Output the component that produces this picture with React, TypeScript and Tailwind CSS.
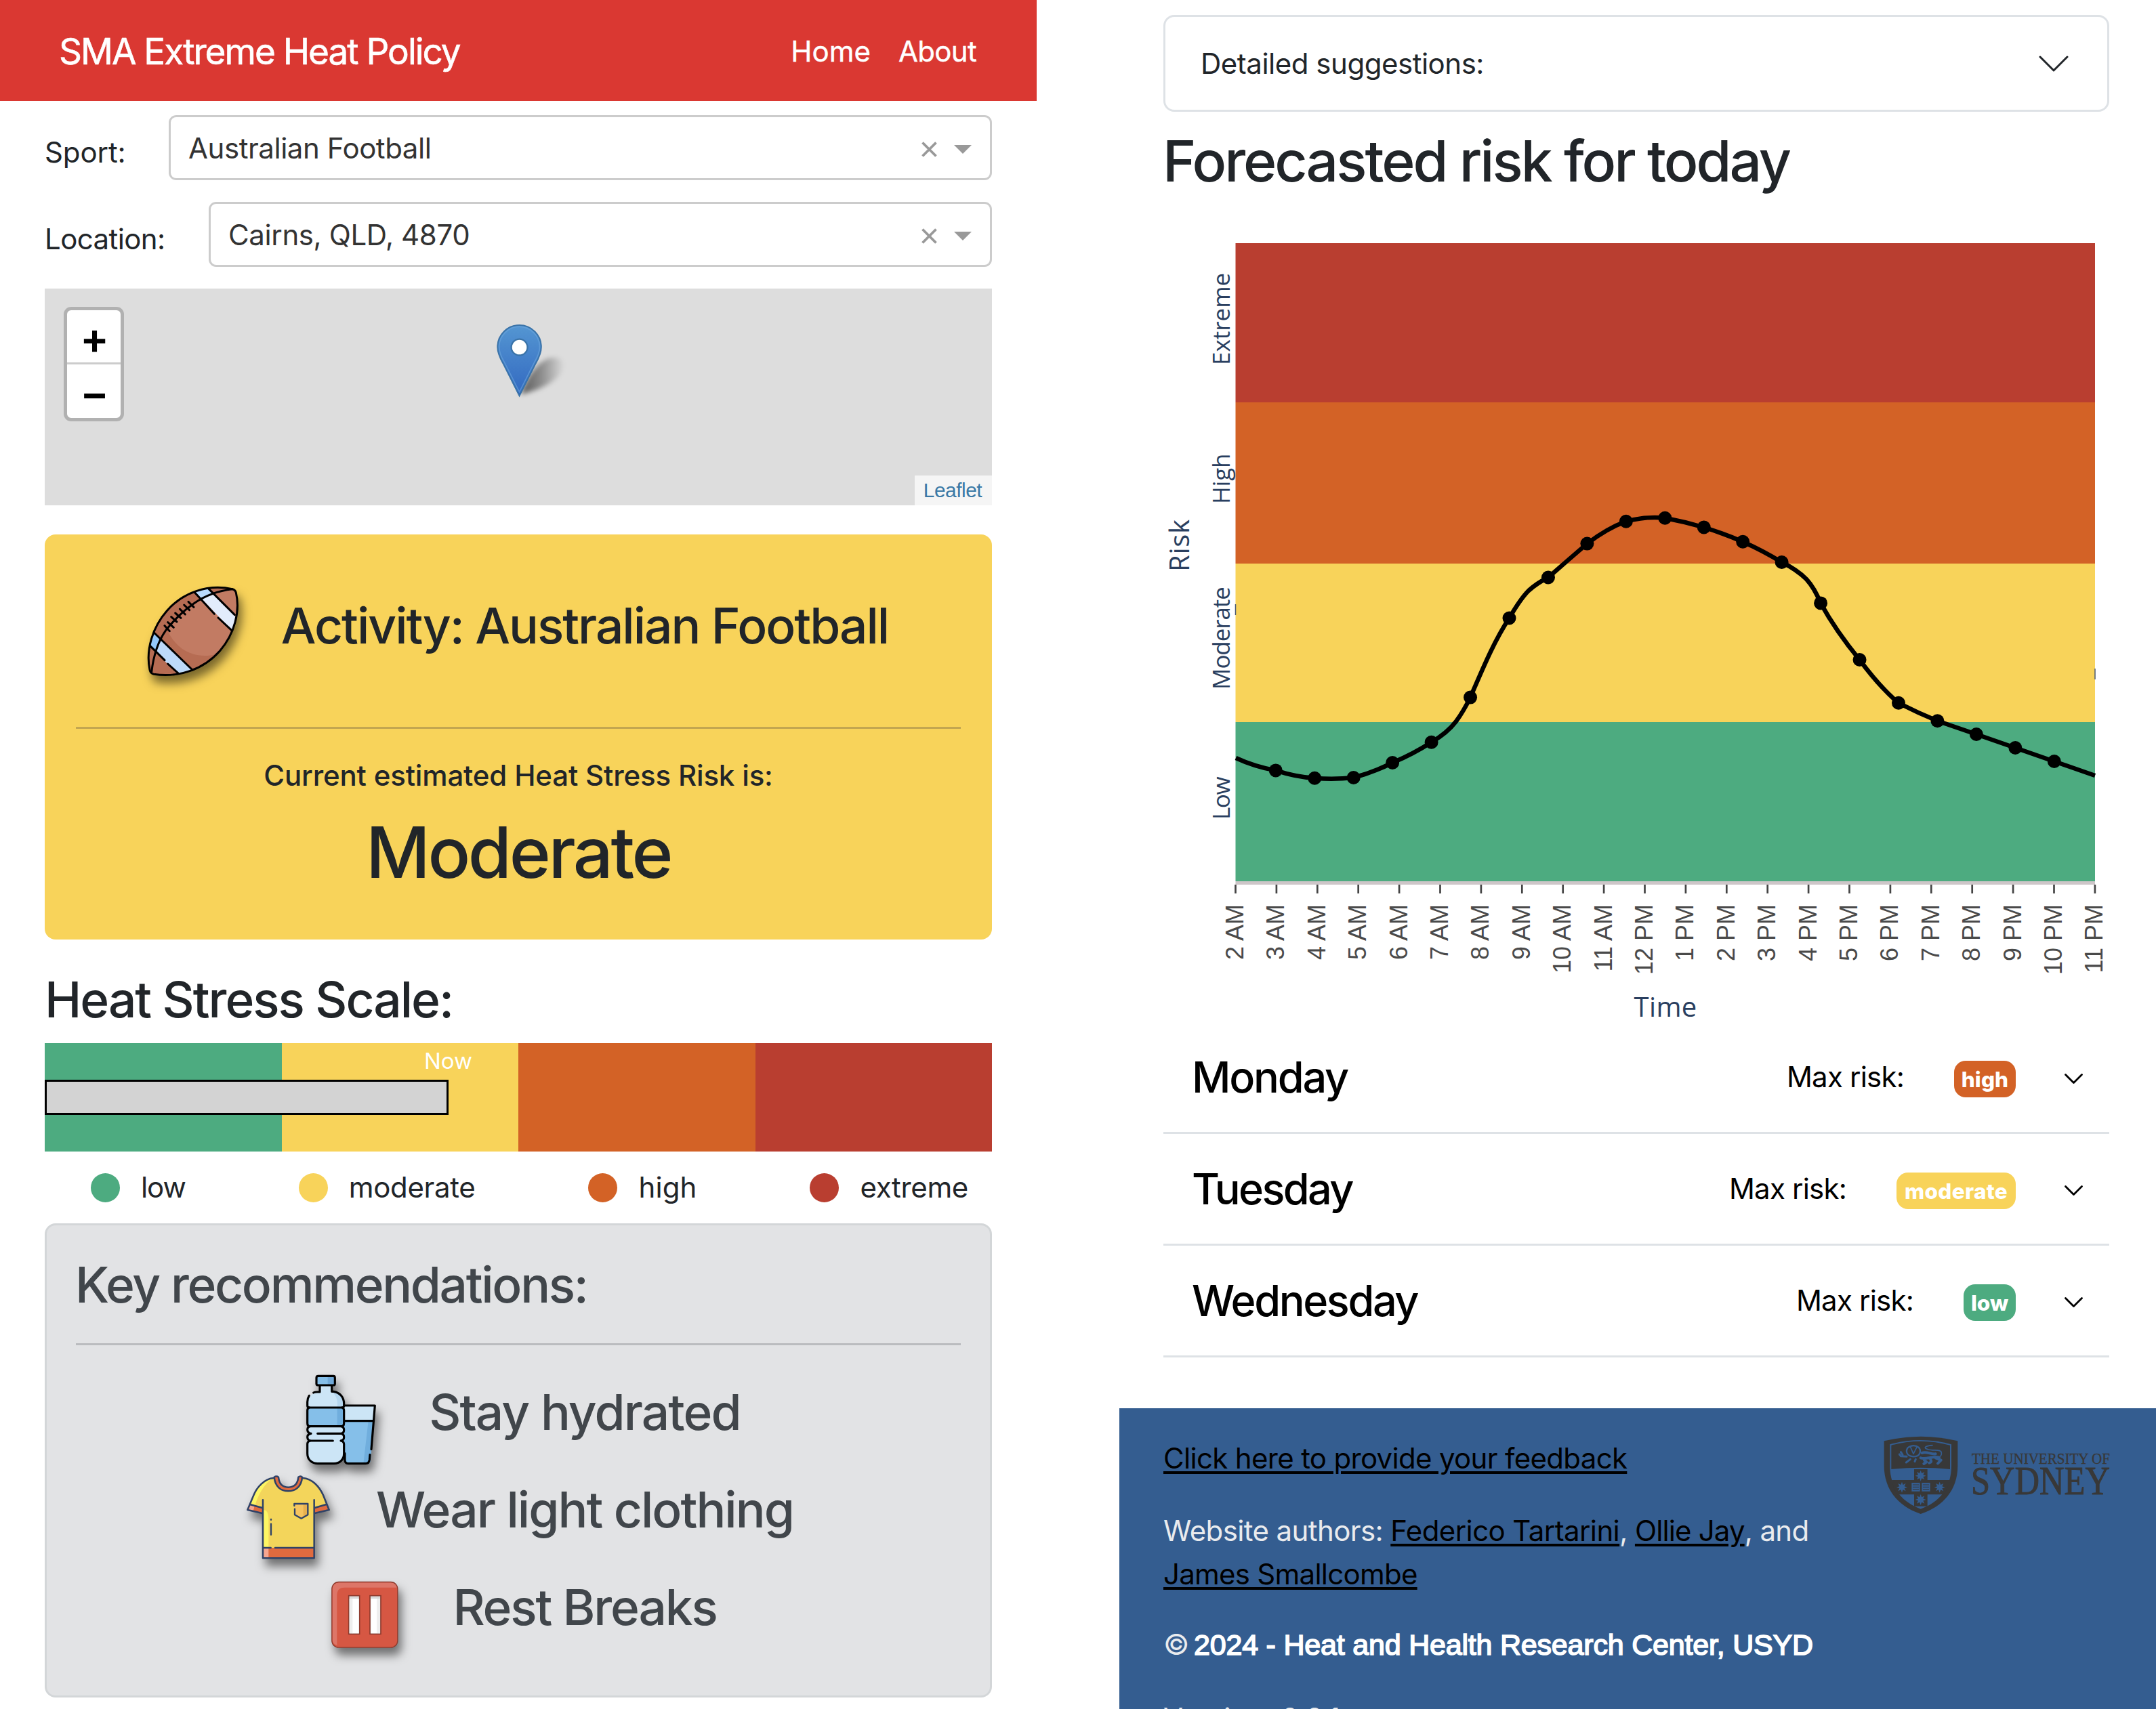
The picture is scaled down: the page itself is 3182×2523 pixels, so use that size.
import React from 'react';

const ICON = 'shrink-0 size-[136px] overflow-visible drop-shadow-[5px_11px_7px_rgba(0,0,0,0.5)]';

function FootballIcon() {
  return (
    <svg viewBox="112 135 408 408" className={ICON} fill="none" strokeLinecap="round" strokeLinejoin="round">
      <defs>
        <clipPath id="ball">
          <path d="M490 152C380 128 270 168 200 248C138 318 105 420 124 510Q127 526 142 529C250 545 360 510 435 425C500 350 525 250 506 168Q503 155 490 152Z" />
        </clipPath>
      </defs>
      <g clipPath="url(#ball)">
        <rect x="100" y="120" width="440" height="440" fill="#c27b63" />
        <path d="M200 330C240 420 320 465 420 440L330 550H100V430Z" fill="#b66c53" />
        <path d="M492 152C420 160 370 180 320 215C270 250 230 290 195 335C160 385 140 450 132 520L90 520V120H492Z" fill="#b66c53" />
        <path d="M325 165L488 335L530 300L385 150Z" fill="#e2ecfb" />
        <path d="M325 165L350 196L402 170L380 140Z" fill="#b9dafc" />
        <path d="M140 343L315 512L250 530L120 400Z" fill="#bddafa" />
        <path d="M140 343L175 372L152 428L118 400Z" fill="#94c8fa" />
      </g>
      <g stroke="#000" strokeWidth="9">
        <path d="M490 152C420 160 370 180 320 215C270 250 230 290 195 335C160 385 140 450 132 520" />
        <path d="M322 166L410 262M427 279L486 334M386 152L500 266M143 345L313 510M126 404L190 467M204 483L249 524" />
        <path d="M190 314L212 338M204 299L230 322M219 275L244 297M237 258L262 280M257 240L281 264M276 222L300 245M295 208L319 232" />
        <path d="M490 152C380 128 270 168 200 248C138 318 105 420 124 510Q127 526 142 529C250 545 360 510 435 425C500 350 525 250 506 168Q503 155 490 152Z" />
      </g>
    </svg>
  );
}

function BottleIcon() {
  return (
    <svg viewBox="286 87 408 408" className={ICON} fill="none" strokeLinecap="round" strokeLinejoin="round">
      <path d="M505 228H641L622 470Q620 485 606 485H520Q508 485 505 470Z" fill="#85bfe9" />
      <path d="M505 228H641L636 296H505Z" fill="#cce5f6" />
      <path d="M612 296H636L622 470Q620 485 600 485H590Z" fill="#70aedd" />
      <path d="M390 97H458Q464 97 464 105V138H382V105Q382 97 390 97Z" fill="#85bfe9" />
      <path d="M432 97H464V138H432Z" fill="#70a9d8" />
      <path d="M397 140H450V165C490 170 504 195 504 225V440C504 470 485 485 460 485H388C360 485 342 465 342 440V225C342 190 360 170 397 168Z" fill="#cce5f6" />
      <path d="M342 237H504V320H342Z" fill="#85bfe9" />
      <path d="M474 237H504V320H474Z" fill="#70aedd" />
      <path d="M450 165C490 170 504 195 504 237H474C478 205 470 185 450 165Z" fill="#b5d6ee" />
      <g stroke="#000" strokeWidth="9.5">
        <path d="M390 97H457Q464 97 464 105V131Q464 138 457 138H390Q382 138 382 131V105Q382 97 390 97ZM397 140V168H385Q374 168 369 171M450 140V166H458C486 170 504 192 504 220V228Q504 237 496 237H350Q342 237 342 228V212Q342 196 350 184" />
        <path d="M350 237Q342 240 342 250V306Q342 320 354 320H492Q504 320 504 306V250Q504 240 496 237" />
        <path d="M354 320Q342 322 342 336Q344 351 358 352M492 320Q504 323 504 336Q504 350 492 352H387M358 352Q342 354 342 368Q343 382 354 384H455M492 352Q504 354 504 368Q504 382 490 384" />
        <path d="M354 384Q342 386 342 400V440C342 468 362 485 388 485H460C486 485 504 466 504 440V400Q504 388 492 384" />
        <path d="M508 228H641L625 422M508 296H636M619 446L617 468Q615 485 600 485H522Q508 485 508 468V440" />
      </g>
    </svg>
  );
}

function ShirtIcon() {
  return (
    <svg viewBox="50 519 408 408" className={ICON} fill="none" strokeLinecap="round" strokeLinejoin="round">
      <path d="M193 546C150 550 115 590 100 630L74 690L143 705V904H370V705L436 690L410 625C392 585 360 550 317 546C310 590 285 605 255 605C225 605 198 590 193 546Z" fill="#f3d55b" />
      <path d="M186 549C150 552 115 590 100 630L86 665L108 671C122 625 145 580 186 549ZM143 690Q168 690 168 730V858H143Z" fill="#fdf664" />
      <path d="M83 667L143 683V706L74 690ZM427 667L370 683V706L436 690ZM143 858H370V904H143Z" fill="#e06a3f" />
      <path d="M83 667L106 673L100 696L74 690ZM143 858H168V904H143Z" fill="#f6a690" />
      <path d="M193 545Q203 536 212 545C215 575 230 590 255 590C280 590 297 575 300 545Q308 536 317 545C314 590 285 607 255 607C225 607 197 590 193 545Z" fill="#e06a3f" />
      <path d="M284 663H342V712L313 727L284 712Z" fill="#f6c45f" />
      <path d="M322 663H342V712L322 722Z" fill="#e7b04f" />
      <g stroke="#2f4267" strokeWidth="7.5">
        <path d="M193 545Q203 538 212 545C215 575 230 590 255 590C280 590 297 575 300 545Q308 538 317 545C314 590 285 607 255 607C225 607 197 590 193 545Z" />
        <path d="M190 549C150 552 115 590 100 630L75 690L140 705M320 549C360 552 392 585 410 625L436 690L372 705M86 666L140 681M424 666L372 681" />
        <path d="M143 646V904H370V646M143 858H178M197 858H370" />
        <path d="M282 672V663H342V712L313 728L284 712V686M179 732V734M179 752V800" strokeWidth="7" />
      </g>
    </svg>
  );
}

function PauseIcon() {
  return (
    <svg viewBox="390 951 408 408" className={ICON} fill="none">
      <rect x="449" y="1009" width="292" height="291" rx="30" fill="#d65743" />
      <path d="M452 1270V1042Q452 1012 482 1012H708Q736 1012 738 1034H505Q472 1034 472 1068V1290Q454 1284 452 1270Z" fill="#dd7668" />
      <rect x="449.500" y="1009.500" width="291" height="290" rx="30" stroke="#8d3b2e" strokeWidth="4" />
      <g stroke="#8d3b2e" strokeWidth="5">
        <rect x="524" y="1070" width="48" height="170" fill="#d9d9d9" />
        <rect x="618" y="1070" width="48" height="170" fill="#d9d9d9" />
      </g>
      <path d="M539 1084H569V1237H539ZM622 1084H650V1237H622Z" fill="#fff" />
      <path d="M527 1084H541V1237H527ZM650 1084H663V1237H650Z" fill="#eee" />
    </svg>
  );
}

function MarkerIcon() {
  return (
    <svg viewBox="90 80 350 340" className="absolute left-[664px] top-[51px] h-[113px] w-[117px] overflow-visible" fill="none">
      <defs>
        <linearGradient id="pin" x1="0" y1="0" x2="0" y2="1">
          <stop offset="0" stopColor="#5496d2" />
          <stop offset="1" stopColor="#3268c0" />
        </linearGradient>
        <linearGradient id="shade" x1="0" y1="0" x2="1" y2="0">
          <stop offset="0" stopColor="#000" stopOpacity="0.6" />
          <stop offset="0.500" stopColor="#000" stopOpacity="0.35" />
          <stop offset="1" stopColor="#000" stopOpacity="0.020" />
        </linearGradient>
        <filter id="soft" x="-30%" y="-30%" width="160%" height="160%">
          <feGaussianBlur stdDeviation="12" />
        </filter>
      </defs>
      <path d="M205 396C225 340 262 262 330 236C400 222 412 270 372 316C330 360 260 384 205 396Z" fill="url(#shade)" filter="url(#soft)" />
      <path d="M199 403L126 258C110 230 102 210 102 186A97 97 0 0 1 296 186C296 210 288 230 272 258Z" fill="url(#pin)" stroke="#3a73a8" strokeWidth="6" />
      <path d="M199 386L133 255C117 228 109 208 109 186A90 90 0 0 1 289 186C289 208 281 228 265 255Z" stroke="#6aa5dc" strokeWidth="5" opacity="0.600" />
      <circle cx="199" cy="187" r="36" fill="#fff" stroke="#3a73a8" strokeWidth="7" />
    </svg>
  );
}

const STARS: [number, number][] = [[284, 269], [201, 320], [368, 320], [284, 375]];

function starPoints(cx: number, cy: number) {
  return Array.from({ length: 16 }, (_, i) => {
    const r = i % 2 ? 12 : 24;
    const a = (i * Math.PI) / 8;
    return `${(cx + r * Math.sin(a)).toFixed(1)},${(cy - r * Math.cos(a)).toFixed(1)}`;
  }).join(' ');
}

function UniversityLogo() {
  return (
    <svg viewBox="120 93 1002 348" className="mt-[41px] h-[116px] w-[334px] shrink-0 overflow-visible">
      <path d="M122 115Q284 76 448 115V225C448 330 385 405 284 438C185 405 122 330 122 225Z" fill="#383838" />
      <path d="M148 130Q284 92 420 130V225C420 320 370 385 284 416C198 385 148 320 148 225Z" fill="#345d90" />
      <path d="M154 134Q284 98 414 134V240Q284 226 154 240Z" fill="#383838" />
      <path d="M255 240H314V288H412Q406 325 386 352H314V404H255V352H182Q162 325 156 288H255Z" fill="#383838" />
      {STARS.map(([x, y]) => (
        <polygon key={`${x}-${y}`} points={starPoints(x, y)} fill="#345d90" />
      ))}
      <path d="M244 300H281V338H244ZM289 300H326V338H289Z" fill="#345d90" />
      <path d="M249 309H276M249 319H276M249 329H276M294 309H321M294 319H321M294 329H321" stroke="#383838" strokeWidth="3" />
      <g fill="none" stroke="#345d90" strokeLinecap="round" strokeLinejoin="round">
        <path d="M290 168C312 160 330 176 350 172M284 190C310 198 340 180 366 188M350 190L374 200L360 214M300 200L310 208L298 216M326 192C330 204 336 208 322 212" strokeWidth="12" />
        <path d="M376 168C376 150 340 160 316 152C296 146 300 138 336 134M376 168C378 178 370 184 364 188" strokeWidth="5" />
        <path d="M222 184L196 182M196 182L190 174M196 164L204 176M238 196L220 210M262 196L258 206" strokeWidth="9" />
        <path d="M226 146C216 164 224 182 252 184C282 184 288 160 276 144Q252 126 226 146Z" strokeWidth="7" />
        <path d="M238 140L252 172L268 140" strokeWidth="5" />
      </g>
      <g fill="#383838" stroke="#383838" fontFamily="Liberation Serif, serif">
        <text x="510" y="215" fontSize="71" strokeWidth="1" textLength="612" lengthAdjust="spacingAndGlyphs">THE UNIVERSITY OF</text>
        <text x="507" y="352" fontSize="175" strokeWidth="3" textLength="615" lengthAdjust="spacingAndGlyphs">SYDNEY</text>
      </g>
    </svg>
  );
}

function Select({ value, className }: { value: string; className: string }) {
  return (
    <div className="flex h-[96px] flex-1 items-center rounded-[11px] border-[3px] border-[#ccc] pl-[26px] pr-[27px]">
      <span className={`flex-1 pt-px text-[42px] leading-[60px] text-[#333] ${className}`}>{value}</span>
      <svg viewBox="0 0 23 23" className="mt-[5px] size-[23px]" stroke="#999" strokeWidth="3.800">
        <path d="M1.500 1.500L21.500 21.500M21.500 1.500L1.500 21.500" />
      </svg>
      <svg viewBox="0 0 26 13" className="ml-[25px] mt-[5px] h-[13px] w-[26px]" fill="#999">
        <path d="M0 0H26L13 13Z" />
      </svg>
    </div>
  );
}

const LEGEND = [
  { label: 'low', dot: 'bg-[#4dab80]', text: 'tracking-[-1.1px]' },
  { label: 'moderate', dot: 'bg-[#f8d35a]', text: 'tracking-[-0.34px]' },
  { label: 'high', dot: 'bg-[#d36226]', text: 'tracking-[0.08px]' },
  { label: 'extreme', dot: 'bg-[#b93e30]', text: 'tracking-[-0.34px]' },
];

const TIPS = [
  { label: 'Stay hydrated', icon: <BottleIcon />, text: 'tracking-[-1.9px]' },
  { label: 'Wear light clothing', icon: <ShirtIcon />, text: 'tracking-[-1.98px]' },
  { label: 'Rest Breaks', icon: <PauseIcon />, text: 'tracking-[-2.15px]' },
];

const DAYS = [
  { day: 'Monday', risk: 'high', dayText: 'tracking-[-2.24px]', badge: 'bg-[#d36226] w-[91px] tracking-[0.1px]' },
  { day: 'Tuesday', risk: 'moderate', dayText: 'tracking-[-2.65px]', badge: 'bg-[#f8d35a] w-[176px] tracking-[0.3px]' },
  { day: 'Wednesday', risk: 'low', dayText: 'tracking-[-2.4px]', badge: 'bg-[#4dab80] w-[77px] tracking-[-0.1px]' },
];

const BANDS = [
  { y: 360, h: 235, fill: '#b93e30' },
  { y: 595, h: 238, fill: '#d36226' },
  { y: 833, h: 234, fill: '#f8d35a' },
  { y: 1067, h: 235, fill: '#4dab80' },
];

const LEVELS = [
  { label: 'Extreme', y: 540, spacing: 0 },
  { label: 'High', y: 745, spacing: -0.2 },
  { label: 'Moderate', y: 1019, spacing: -1.1 },
  { label: 'Low', y: 1211, spacing: -1.4 },
];

const HOURS = [
  '2 AM', '3 AM', '4 AM', '5 AM', '6 AM', '7 AM', '8 AM', '9 AM', '10 AM', '11 AM', '12 PM',
  '1 PM', '2 PM', '3 PM', '4 PM', '5 PM', '6 PM', '7 PM', '8 PM', '9 PM', '10 PM', '11 PM',
];

const DOT_Y = [
  1138.4, 1149.8, 1149, 1127, 1096.7, 1030.6, 913.5, 853.5, 803.6, 770.8, 765.7,
  779.5, 800.7, 831, 891.4, 975, 1038.8, 1065.3, 1085, 1105, 1125,
];

const CURVE =
  'M1824 1120Q1852 1133 1882.800 1138.400Q1912 1148 1940.200 1149.800Q1970 1152 1997.700 1149Q2028 1141 2055 1127Q2086 1114 2112.600 1096.700' +
  'Q2136 1083 2149 1066Q2160 1051 2170 1030.600C2190 984 2206 946 2227.500 913.500Q2244 885 2256 873Q2268 862 2285 853.500Q2314 828 2342.400 803.600' +
  'Q2372 781 2399.800 770.800Q2428 763 2457.300 765.700Q2486 771 2514.700 779.500Q2545 789 2572 800.700Q2602 814 2629.600 831' +
  'Q2652 842 2666 856Q2678 869 2687 891.400C2706 926 2724 950 2744.500 975Q2774 1015 2802 1038.800Q2830 1053 2859.400 1065.300L2916.800 1085L2974.300 1105L3031.700 1125L3092 1146';

function RiskChart() {
  return (
    <svg viewBox="1717 320 1396 1190" className="mt-[36px] block h-[1190px] w-[1396px] overflow-visible">
      {BANDS.map((b) => (
        <rect key={b.y} x="1823.500" y={b.y} width="1268.500" height={b.h} fill={b.fill} />
      ))}
      <path d="M1823.500 1304.500H3092" stroke="#cdc6c8" strokeWidth="5" />
      <path d="M1823.500 893V909M3092 988V1004" stroke="#4b5a70" strokeWidth="1.500" />
      <g fill="#2a3f5f" fontFamily="Open Sans, sans-serif" fontSize="35">
        {LEVELS.map((l) => (
          <text key={l.label} transform={`translate(1815 ${l.y}) rotate(-90)`} letterSpacing={l.spacing}>{l.label}</text>
        ))}
        <text transform="translate(1754.500 845) rotate(-90)" fontSize="40" letterSpacing="0.700">Risk</text>
        <text x="2411.500" y="1502" fontSize="40" letterSpacing="0.400">Time</text>
      </g>
      <g fill="#4a4a4a" fontFamily="Liberation Sans, sans-serif" fontSize="36" textAnchor="end">
        {HOURS.map((h, i) => {
          const x = 1823.5 + i * 60.4;
          return (
            <g key={h}>
              <path d={`M${x} 1307V1320`} stroke="#444" strokeWidth="2.700" />
              <text transform={`translate(${x + 11.5} 1336) rotate(-90)`}>{h}</text>
            </g>
          );
        })}
      </g>
      <path d={CURVE} fill="none" stroke="#000" strokeWidth="6.500" />
      {DOT_Y.map((y, i) => (
        <circle key={i} cx={1882.8 + i * 57.45} cy={y} r="10" />
      ))}
    </svg>
  );
}

export default function App() {
  return (
    <div className="flex h-[2523px] w-[3182px] gap-[122px] overflow-hidden bg-white font-['Inter',sans-serif] text-[#212529]">
      <main className="w-[1530px] shrink-0">
        <header className="flex h-[149px] items-center bg-[#da3832] pl-[87px] pr-[89px] pt-0.5 text-white">
          <h1 className="flex-1 text-[53px] leading-[70px] tracking-[-2px] [-webkit-text-stroke:0.6px_white]">SMA Extreme Heat Policy</h1>
          <nav className="flex gap-[41px] text-[42px] leading-[60px] [-webkit-text-stroke:0.4px_white]">
            <a className="tracking-[0px]">Home</a>
            <a className="tracking-[-0.68px]">About</a>
          </nav>
        </header>

        <div className="px-[66px]">
          <div className="mt-[21px] flex items-center">
            <label className="w-[183px] pt-[14px] text-[42px] leading-[60px] tracking-[-0.1px]">Sport:</label>
            <Select value="Australian Football" className="tracking-[-0.45px]" />
          </div>
          <div className="mt-[32px] flex items-center">
            <label className="w-[242px] pt-[13px] text-[42px] leading-[60px] tracking-[-0.6px]">Location:</label>
            <Select value="Cairns, QLD, 4870" className="tracking-[-0.38px]" />
          </div>

          <section className="relative mt-[32px] h-[320px] bg-[#ddd]">
            <div className="absolute left-7 top-[27px] h-[169px] w-[89px] rounded-[11px] border-[5px] border-[#b1b1b1] bg-white text-center text-[64px] font-semibold text-black">
              <div className="h-[80px] border-b-[3px] border-[#ccc] pl-0.5 leading-[82px]">+</div>
              <div className="h-[79px] pl-0.5 leading-[83px]">−</div>
            </div>
            <MarkerIcon />
            <div className="absolute bottom-0 right-0 h-[44px] w-[114px] bg-white/70 pr-0.5 text-center font-['Liberation_Sans',sans-serif] text-[29.8px] leading-[43px] tracking-[-0.45px] text-[#3a79a6]">
              Leaflet
            </div>
          </section>

          <section className="mt-[43px] h-[598px] rounded-[16px] bg-[#f8d35a] px-[46px] pt-[75px] text-center font-medium">
            <div className="-ml-0.5 flex items-center justify-center gap-[62px]">
              <FootballIcon />
              <h2 className="pb-[17px] text-[73px] leading-[80px] tracking-[-2.03px]">Activity: Australian Football</h2>
            </div>
            <hr className="mt-[73px] border-t-[3px] border-[#c3a650]" />
            <p className="mt-[39px] text-[42px] leading-[60px] tracking-[-0.16px]">Current estimated Heat Stress Risk is:</p>
            <p className="mt-[33px] text-[104px] leading-[100px] tracking-[-3.4px]">Moderate</p>
          </section>

          <h2 className="mt-[49px] text-[73px] font-medium leading-[80px] tracking-[-2.02px]">Heat Stress Scale:</h2>
          <section className="relative mt-[24px] grid h-[160px] grid-cols-4">
            <div className="bg-[#4dab80]" />
            <div className="bg-[#f8d35a]" />
            <div className="bg-[#d36226]" />
            <div className="bg-[#b93e30]" />
            <div className="absolute left-0 top-[54px] h-[52px] w-[596px] border-[3px] border-black bg-[#d3d3d3]" />
            <span className="absolute left-[560px] top-[6px] text-[33px] leading-[40px] text-white">Now</span>
          </section>

          <ul className="flex h-[106px] items-center justify-between pl-[68px] pr-[35px]">
            {LEGEND.map((l) => (
              <li key={l.label} className="flex items-center gap-[31px]">
                <span className={`size-[43px] rounded-full ${l.dot}`} />
                <span className={`text-[42px] leading-[60px] ${l.text}`}>{l.label}</span>
              </li>
            ))}
          </ul>

          <section className="h-[700px] rounded-[16px] border-[3px] border-[#d3d6d8] bg-[#e2e3e5] px-[43px] pt-[48px] font-medium text-[#41464b]">
            <h2 className="-ml-px text-[73px] leading-[80px] tracking-[-2.32px]">Key recommendations:</h2>
            <hr className="mb-[38px] mt-[46px] border-t-[3px] border-[#babcbf]" />
            {TIPS.map((t) => (
              <div key={t.label} className="-ml-0.5 flex h-[144px] items-center justify-center gap-[62px]">
                {t.icon}
                <p className={`pb-[22px] text-[73px] leading-[80px] ${t.text}`}>{t.label}</p>
              </div>
            ))}
          </section>
        </div>
      </main>

      <aside className="w-[1530px] shrink-0 pt-[22px]">
        <div className="pl-[65px] pr-[69px]">
          <div className="flex h-[143px] items-center justify-between rounded-[16px] border-[3px] border-[#dee2e6] pl-[52px] pr-[57px]">
            <span className="text-[42px] leading-[60px] tracking-[-0.48px]">Detailed suggestions:</span>
            <svg viewBox="0 0 44 24" className="h-[24px] w-[44px]" fill="none" stroke="#212529" strokeWidth="3" strokeLinecap="round" strokeLinejoin="round">
              <path d="M2 2L22 22L42 2" />
            </svg>
          </div>
          <h2 className="-ml-px mt-[28px] text-[84px] font-medium leading-[90px] tracking-[-3.03px]">Forecasted risk for today</h2>
          <RiskChart />
          {DAYS.map((d) => (
            <div key={d.day} className="flex h-[165px] items-center border-b-[3px] border-[#dee2e6] pl-[42px] pr-[39px] text-black">
              <h3 className={`flex-1 text-[63px] font-medium leading-[80px] ${d.dayText}`}>{d.day}</h3>
              <span className="text-[42px] leading-[60px] tracking-[-0.8px]">Max risk:</span>
              <span className={`ml-[74px] mt-1.5 h-[54px] rounded-[17px] text-center text-[31.5px] font-extrabold leading-[56px] text-white ${d.badge}`}>{d.risk}</span>
              <svg viewBox="0 0 27 15" className="ml-[72px] mt-1 h-[15px] w-[27px]" fill="none" stroke="#000" strokeWidth="2.800" strokeLinecap="round" strokeLinejoin="round">
                <path d="M1.500 1.500L13.500 13.500L25.500 1.500" />
              </svg>
            </div>
          ))}
        </div>

        <footer className="mt-[75px] flex h-[480px] items-start justify-between bg-[#345d90] pl-[65px] pr-[68px] text-[42px] leading-[64px] text-[#e9ebee]">
          <div className="pt-[42px]">
            <p className="tracking-[-0.68px]">
              <a className="text-black underline decoration-[4px] underline-offset-[4px]">Click here to provide your feedback</a>
            </p>
            <p className="mt-[43px] tracking-[-0.6px]">
              Website authors: <a className="text-black underline decoration-[4px] underline-offset-[4px]">Federico Tartarini</a>,{' '}
              <a className="tracking-[-0.86px] text-black underline decoration-[4px] underline-offset-[4px]">Ollie Jay</a>, and
              <br />
              <a className="tracking-[-0.75px] text-black underline decoration-[4px] underline-offset-[4px]">James Smallcombe</a>
            </p>
            <p className="mt-[40px] flex items-baseline">
              <span className="w-[45px]">©</span>
              <span className="font-['Liberation_Sans',sans-serif] text-[43px] tracking-[-0.2px] text-white [-webkit-text-stroke:1.6px_white]">
                2024 - Heat and Health Research Center, USYD
              </span>
            </p>
            <p className="mt-[45px]">Version: 0.0.1</p>
          </div>
          <UniversityLogo />
        </footer>
      </aside>
    </div>
  );
}
